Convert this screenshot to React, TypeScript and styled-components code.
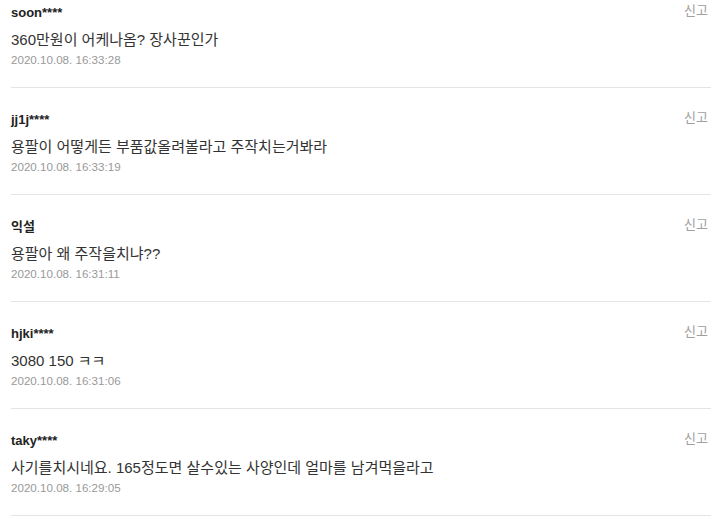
import React from "react";
import styled, { createGlobalStyle } from "styled-components";

const Global = createGlobalStyle`
  html, body { margin: 0; padding: 0; background: #fff; }
  body { font-family: "Liberation Sans", "Noto Sans CJK KR", sans-serif; }
`;

const List = styled.ul`
  list-style: none;
  margin: 0;
  padding: 0 16px 0 11px;
  width: 700px;
`;

const Item = styled.li`
  position: relative;
  padding: 23px 0 0;
  height: 83px;
  border-bottom: 1px solid #e4e4e4;
  &:first-child {
    padding-top: 4px;
    height: 83px;
  }
`;

const User = styled.div`
  font-size: 13px;
  font-weight: bold;
  color: #222;
  line-height: 18px;
`;

const Content = styled.p`
  margin: 8px 0 0;
  font-size: 15px;
  color: #333;
  line-height: 20px;
`;

const Date = styled.div`
  margin-top: 2px;
  font-size: 11.6px;
  color: #999;
  line-height: 16px;
`;

const Report = styled.button`
  position: absolute;
  top: ${(p: { $first?: boolean }) => (p.$first ? "2px" : "21px")};
  right: 3px;
  border: 0;
  background: none;
  padding: 0;
  font-family: inherit;
  font-size: 13px;
  color: #a0a0a0;
  line-height: 18px;
  cursor: pointer;
`;

const comments = [
  { user: "soon****", text: "360만원이 어케나옴? 장사꾼인가", date: "2020.10.08. 16:33:28" },
  { user: "jj1j****", text: "용팔이 어떻게든 부품값올려볼라고 주작치는거봐라", date: "2020.10.08. 16:33:19" },
  { user: "익설", text: "용팔아 왜 주작을치냐??", date: "2020.10.08. 16:31:11" },
  { user: "hjki****", text: "3080 150 ㅋㅋ", date: "2020.10.08. 16:31:06" },
  { user: "taky****", text: "사기를치시네요. 165정도면 살수있는 사양인데 얼마를 남겨먹을라고", date: "2020.10.08. 16:29:05" },
];

export default function App() {
  return (
    <>
      <Global />
      <List>
        {comments.map((c, i) => (
          <Item key={i}>
            <User>{c.user}</User>
            <Content>{c.text}</Content>
            <Date>{c.date}</Date>
            <Report $first={i === 0}>신고</Report>
          </Item>
        ))}
      </List>
    </>
  );
}
